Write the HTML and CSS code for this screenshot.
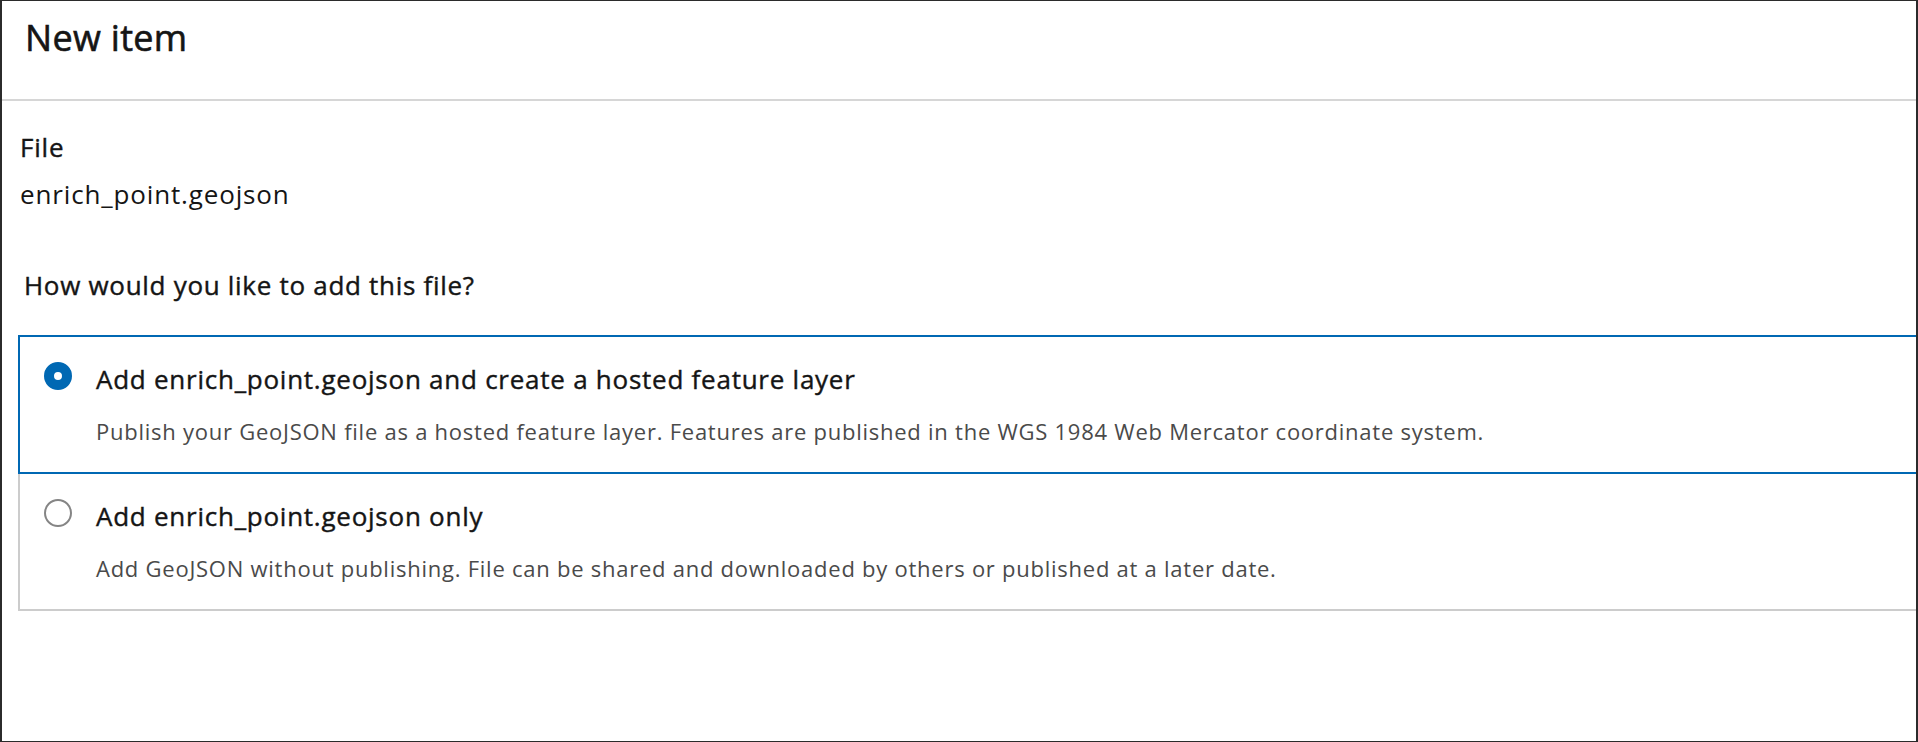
FILE: index.html
```html
<!DOCTYPE html>
<html lang="en">
<head>
<meta charset="utf-8">
<title>New item</title>
<link rel="stylesheet" href="styles.css">
</head>
<body>
<div class="frame">
  <header class="hdr">
    <h1 class="hdr-title">New item</h1>
  </header>
  <section class="content">
    <div class="field">
      <div class="label">File</div>
      <div class="value">enrich_point.geojson</div>
    </div>
    <div class="question">How would you like to add this file?</div>
    <div class="options">
      <div class="opt selected">
        <span class="radio checked"></span>
        <div class="opt-text">
          <div class="opt-title">Add enrich_point.geojson and create a hosted feature layer</div>
          <div class="opt-desc">Publish your GeoJSON file as a hosted feature layer. Features are published in the WGS 1984 Web Mercator coordinate system.</div>
        </div>
      </div>
      <div class="opt">
        <span class="radio"></span>
        <div class="opt-text">
          <div class="opt-title">Add enrich_point.geojson only</div>
          <div class="opt-desc">Add GeoJSON without publishing. File can be shared and downloaded by others or published at a later date.</div>
        </div>
      </div>
    </div>
  </section>
</div>
</body>
</html>
```
FILE: styles.css
```css
* { box-sizing: border-box; }

html, body {
  margin: 0;
  padding: 0;
  background: #ffffff;
}

body {
  font-family: "Open Sans", "Noto Sans", "Liberation Sans", sans-serif;
  color: #151515;
}

.frame {
  width: 1918px;
  height: 742px;
  border: 1px solid #2b2b2b;
  border-left-width: 2px;
  border-right-width: 2px;
  overflow: hidden;
  background: #ffffff;
}

.hdr {
  height: 100px;
  padding: 17px 0 0 23px;
  border-bottom: 2px solid #d6d6d6;
}

.hdr-title {
  margin: 0;
  font-size: 36px;
  line-height: 40px;
  font-weight: 400;
  letter-spacing: 0.3px;
  -webkit-text-stroke: 0.6px #151515;
  color: #151515;
}

.content {
  padding: 28px 0 0 18px;
}

.label {
  font-size: 26px;
  line-height: 36px;
  font-weight: 400;
  letter-spacing: 0.8px;
  -webkit-text-stroke: 0.4px #151515;
  color: #151515;
}

.value {
  margin-top: 11px;
  font-size: 26px;
  line-height: 36px;
  font-weight: 400;
  letter-spacing: 0.85px;
  color: #151515;
}

.question {
  margin: 55px 0 0 4px;
  font-size: 26px;
  line-height: 36px;
  font-weight: 400;
  letter-spacing: 0.7px;
  -webkit-text-stroke: 0.4px #151515;
  color: #151515;
}

.options {
  margin-top: 32px;
  margin-left: -2px;
  margin-right: -60px;
}

.opt {
  display: flex;
  align-items: flex-start;
  gap: 24px;
  padding: 24px;
  border: 2px solid #cccccc;
  background: #ffffff;
}

.opt + .opt {
  margin-top: -2px;
}

.opt.selected {
  position: relative;
  z-index: 1;
  border-color: #0068b3;
}

.radio {
  flex: none;
  width: 28px;
  height: 28px;
  margin-top: 1px;
  border-radius: 50%;
  border: 2px solid #858585;
  background: #ffffff;
}

.radio.checked {
  border: 10.5px solid #0068b3;
}

.opt-text {
  flex: 1;
  min-width: 0;
}

.opt-title {
  font-size: 26px;
  line-height: 36px;
  font-weight: 400;
  letter-spacing: 0.75px;
  -webkit-text-stroke: 0.4px #151515;
  color: #151515;
}

.opt-desc {
  margin-top: 18px;
  font-size: 22px;
  line-height: 33px;
  font-weight: 400;
  letter-spacing: 0.75px;
  color: #4a4a4a;
}
```
